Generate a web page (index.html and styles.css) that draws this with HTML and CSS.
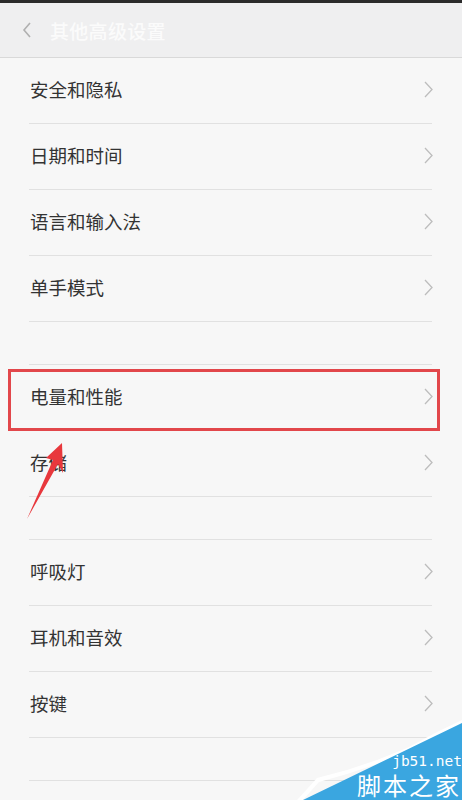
FILE: index.html
```html
<!DOCTYPE html>
<html lang="zh">
<head>
<meta charset="utf-8">
<link rel="stylesheet" href="styles.css">
</head>
<body>
<div class="screen">
  <div class="status"></div>
  <div class="header">
    <svg class="back" width="12" height="16" viewBox="0 0 12 16"><path d="M9 1 L3 8 L9 15" fill="none" stroke="#b0b0b0" stroke-width="1.6"/></svg>
    <span class="title">其他高级设置</span>
  </div>
  <div class="list">
    <div class="group first">
      <div class="row"><span>安全和隐私</span><svg class="chev" width="9" height="17" viewBox="0 0 9 17"><path d="M1 1 L8 8.5 L1 16" fill="none" stroke="#bdbdbd" stroke-width="1.3"/></svg></div>
      <div class="row"><span>日期和时间</span><svg class="chev" width="9" height="17" viewBox="0 0 9 17"><path d="M1 1 L8 8.5 L1 16" fill="none" stroke="#bdbdbd" stroke-width="1.3"/></svg></div>
      <div class="row"><span>语言和输入法</span><svg class="chev" width="9" height="17" viewBox="0 0 9 17"><path d="M1 1 L8 8.5 L1 16" fill="none" stroke="#bdbdbd" stroke-width="1.3"/></svg></div>
      <div class="row"><span>单手模式</span><svg class="chev" width="9" height="17" viewBox="0 0 9 17"><path d="M1 1 L8 8.5 L1 16" fill="none" stroke="#bdbdbd" stroke-width="1.3"/></svg></div>
    </div>
    <div class="group">
      <div class="row"><span>电量和性能</span><svg class="chev" width="9" height="17" viewBox="0 0 9 17"><path d="M1 1 L8 8.5 L1 16" fill="none" stroke="#bdbdbd" stroke-width="1.3"/></svg></div>
      <div class="row"><span>存储</span><svg class="chev" width="9" height="17" viewBox="0 0 9 17"><path d="M1 1 L8 8.5 L1 16" fill="none" stroke="#bdbdbd" stroke-width="1.3"/></svg></div>
    </div>
    <div class="group">
      <div class="row"><span>呼吸灯</span><svg class="chev" width="9" height="17" viewBox="0 0 9 17"><path d="M1 1 L8 8.5 L1 16" fill="none" stroke="#bdbdbd" stroke-width="1.3"/></svg></div>
      <div class="row"><span>耳机和音效</span><svg class="chev" width="9" height="17" viewBox="0 0 9 17"><path d="M1 1 L8 8.5 L1 16" fill="none" stroke="#bdbdbd" stroke-width="1.3"/></svg></div>
      <div class="row"><span>按键</span><svg class="chev" width="9" height="17" viewBox="0 0 9 17"><path d="M1 1 L8 8.5 L1 16" fill="none" stroke="#bdbdbd" stroke-width="1.3"/></svg></div>
    </div>
    <div class="group last"></div>
  </div>

  <div class="highlight"></div>
  <svg class="arrow" width="50" height="90" viewBox="0 0 50 90">
    <polygon points="42,0 43,30 38,21 7,76 33,17 26,15" fill="#e8383d"/>
  </svg>
  <div class="watermark">
    <svg class="wm-bg" width="165" height="80" viewBox="0 0 165 80">
      <polygon points="0,80 20,58 50,50 80,40 110,28 140,12 165,0 165,3 140,16 110,31 80,44 50,54 22,62 6,80" fill="#ffffff"/>
      <polygon points="6,80 165,3 165,80" fill="#3aa6e0"/>
    </svg>
    <span class="wm-url">jb51.net</span>
    <span class="wm-name">脚本之家</span>
  </div>
</div>
</body>
</html>
```

FILE: styles.css
```css
html, body {
  margin: 0;
  padding: 0;
}
body {
  width: 462px;
  height: 800px;
  overflow: hidden;
  background: #f7f7f7;
  font-family: "Noto Sans CJK SC", "Noto Sans", sans-serif;
}
.screen {
  position: relative;
  width: 462px;
  height: 800px;
  overflow: hidden;
  background: #f7f7f7;
}
.status {
  height: 3px;
  background: #2b2b2b;
}
.header {
  height: 54px;
  background: #efeff0;
  border-bottom: 1px solid #d9d9d9;
  display: flex;
  align-items: center;
  padding-left: 21px;
}
.back {
  margin-right: 17px;
}
.title {
  color: #fbfbfb;
  font-size: 19px;
  font-weight: 500;
  letter-spacing: 0.3px;
}
.list {
  padding: 0 30px 0 29px;
}
.group {
  border-top: 1px solid #e1e1e1;
  margin-top: 42px;
}
.group.first {
  border-top: none;
  margin-top: 0;
}
.group.last {
  margin-top: 42px;
}
.row {
  box-sizing: border-box;
  height: 66px;
  padding-bottom: 3px;
  padding-left: 1px;
  border-bottom: 1px solid #e1e1e1;
  display: flex;
  align-items: center;
  justify-content: space-between;
  color: #333333;
  font-size: 18.5px;
}
.chev {
  margin-right: -1px;
}
.highlight {
  position: absolute;
  left: 8px;
  top: 369px;
  width: 426px;
  height: 56px;
  border: 3px solid #e2474b;
}
.arrow {
  position: absolute;
  left: 20px;
  top: 443px;
}
.watermark {
  position: absolute;
  right: 0;
  bottom: 0;
  width: 165px;
  height: 80px;
}
.wm-bg {
  position: absolute;
  left: 0;
  top: 0;
}
.wm-url {
  position: absolute;
  right: 0;
  top: 33px;
  color: #ffffff;
  font-family: "DejaVu Sans Mono", monospace;
  font-size: 14.5px;
  line-height: 16px;
}
.wm-name {
  position: absolute;
  right: 1px;
  top: 51px;
  color: #ffffff;
  font-size: 24px;
  line-height: 27px;
  letter-spacing: 2px;
}
```
